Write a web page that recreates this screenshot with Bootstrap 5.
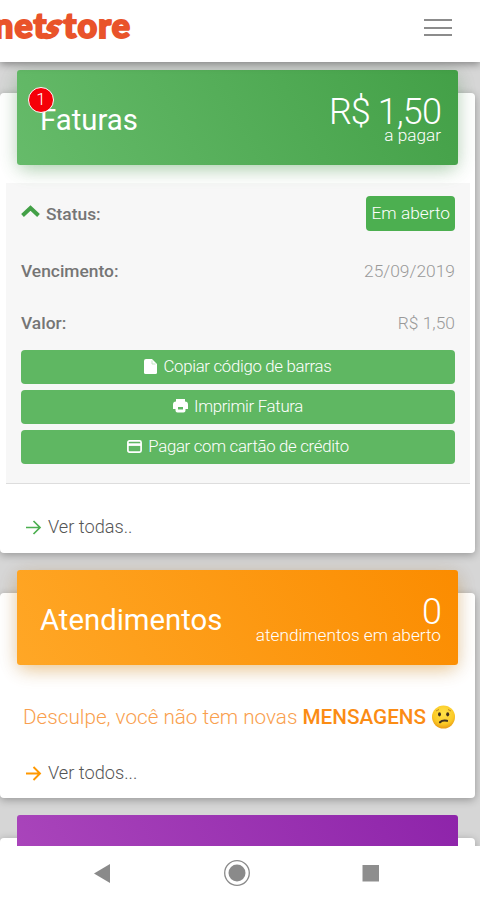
<!DOCTYPE html>
<html lang="pt-BR">
<head>
<meta charset="utf-8">
<meta name="viewport" content="width=device-width, initial-scale=1">
<title>netstore</title>
<link href="https://cdn.jsdelivr.net/npm/bootstrap@5.3.0/dist/css/bootstrap.min.css" rel="stylesheet">
<style>
body{font-family:Roboto,"Liberation Sans",sans-serif;font-weight:300;font-size:18px;line-height:24px;color:#555;background:#d6d6d6;height:900px}
.topbar{height:62px;box-shadow:0 2px 8px rgba(0,0,0,.4);z-index:3;padding:0 28px 7px 0}
.brand{font-family:Lato,sans-serif;font-weight:900;font-size:34px;line-height:40px;letter-spacing:1.1px;color:#e9532a;-webkit-text-stroke:2px #e9532a;margin-left:-6px;margin-top:-5px}
.brand i{display:inline-block;font-style:normal;transform:skewX(-26deg)}
.burger{width:28px;height:17px;border:0;padding:0;background:none}
.burger span{display:block;height:2px;background:#8c8c8c}
.feed{height:784px;padding-right:5px}
.panel{background:#fff;border:0;border-radius:4px;box-shadow:0 2px 8px rgba(0,0,0,.3)}
.panel-a{margin-top:31px;height:460px}
.panel-b{margin-top:40px;height:205px}
.panel-c{margin-top:40px;height:200px}
.banner{margin:-23px 17px 0 17px;height:95px;border-radius:3px;color:#fff;padding:0 17px 0 23px}
.banner h2{font-size:29.3px;font-weight:400;line-height:36px;margin:4px 0 0}
.banner .amount{font-size:36px;line-height:36px;letter-spacing:-.9px}
.banner .caption-line{font-size:17.2px;line-height:12px;margin-top:-1px}
.b-green{background:linear-gradient(60deg,#66bb6a,#43a047);box-shadow:0 6px 18px -4px rgba(76,175,80,.45),0 4px 20px rgba(0,0,0,.1)}
.b-orange{background:linear-gradient(60deg,#ffa726,#fb8c00);box-shadow:0 6px 18px -4px rgba(255,152,0,.45),0 4px 20px rgba(0,0,0,.12)}
.b-purple{background:linear-gradient(60deg,#ab47bc,#8e24aa)}
.count{position:absolute;left:11px;top:17px;width:26px;height:26px;border-radius:50%;background:#f50008;border:1.5px solid #fff;font-size:17px;line-height:23px;text-align:center}
.detail{margin:18px 5px 0 6px;height:301px;background:#f7f7f7;border-bottom:1.5px solid #ddd;padding:13px 15px 0}
.detail strong{font-weight:500;color:#757575;font-size:17.4px}
.detail .val{color:#999;font-size:17.4px}
.r1{height:35px}
.r2{height:52px}
.r1 + .r2{margin-top:14px}
.status-tag{background:#4caf50;color:#fff;border-radius:4px;height:35px;line-height:35px;padding:0 5px 0 6px;font-size:17.3px}
.btn-stack{margin-top:1px}
.btn-act{height:34px;background:#5fb762;color:#fff;border:0;border-radius:4px;padding:0 0 2px;font-size:16.8px;letter-spacing:-.3px;font-weight:300;line-height:32px}
.btn-act svg,.more svg{margin-right:6px}
.chev{margin:-3px 6px 0 0}
.more{color:#555;font-size:18.2px;padding-left:26px}
.notice{color:#f9a04e;font-size:20.7px;padding-left:23px;margin-top:39px;line-height:26px}
.notice strong{font-weight:500;color:#fb8c14}
.sysbar{height:54px;background:#fff;z-index:3}
</style>
<script src="https://cdn.jsdelivr.net/npm/bootstrap@5.3.0/dist/js/bootstrap.bundle.min.js"></script>
</head>
<body class="d-flex flex-column overflow-hidden m-0">
<header class="topbar bg-white d-flex align-items-center justify-content-between position-relative flex-shrink-0">
  <div class="brand text-nowrap">net<i>s</i>tore</div>
  <button class="burger d-flex flex-column justify-content-between" aria-label="Menu"><span class="w-100"></span><span class="w-100"></span><span class="w-100"></span></button>
</header>

<main class="feed overflow-hidden flex-shrink-0">
  <section class="card panel panel-a">
    <div class="banner b-green position-relative d-flex align-items-center justify-content-between">
      <h2>Faturas</h2>
      <span class="count">1</span>
      <div class="text-end"><div class="amount">R$ 1,50</div><div class="caption-line">a pagar</div></div>
    </div>
    <div class="detail">
      <div class="r1 d-flex align-items-center justify-content-between">
        <div class="d-flex align-items-center"><svg width="19" height="14" viewBox="0 0 19 14" class="chev"><path d="M1.500 10.500 9.500 3l8 7.500" fill="none" stroke="#43a047" stroke-width="4"/></svg><strong>Status:</strong></div>
        <span class="status-tag">Em aberto</span>
      </div>
      <div class="r2 d-flex align-items-center justify-content-between"><strong>Vencimento:</strong><span class="val">25/09/2019</span></div>
      <div class="r2 d-flex align-items-center justify-content-between"><strong>Valor:</strong><span class="val">R$ 1,50</span></div>
      <div class="d-grid btn-stack" style="gap:6px">
        <button class="btn btn-act d-flex align-items-center justify-content-center"><svg width="13" height="15" viewBox="0 0 13 15"><path d="M2 0h6l5 5v8.500a1.500 1.500 0 0 1-1.500 1.500h-10A1.500 1.500 0 0 1 0 13.500V2a2 2 0 0 1 2-2Z" fill="#fff"/><path d="M8 1.500V5h3.500" fill="none" stroke="#b5dfb6" stroke-width=".8"/></svg><span>Copiar código de barras</span></button>
        <button class="btn btn-act d-flex align-items-center justify-content-center"><svg width="15" height="14" viewBox="0 0 15 14"><path d="M3 0h9v2.500a3 3 0 0 1 3 3V10h-2.500v1.500a2 2 0 0 1-2 2h-6a2 2 0 0 1-2-2V10H0V5.500a3 3 0 0 1 3-3Z" fill="#fff"/><path d="M5 8h5v2.500H5z" fill="#5fb762"/></svg><span>Imprimir Fatura</span></button>
        <button class="btn btn-act d-flex align-items-center justify-content-center"><svg width="15" height="13" viewBox="0 0 15 13"><rect x=".9" y=".9" width="13.200" height="11.200" rx="1.500" fill="none" stroke="#fff" stroke-width="1.700"/><path d="M1 4.600h13" stroke="#fff" stroke-width="2.600"/></svg><span>Pagar com cartão de crédito</span></button>
      </div>
    </div>
    <div class="more d-flex align-items-center" style="margin-top:31px"><svg width="16" height="15" viewBox="0 0 16 15"><path d="M0 7.500h14M7.500 1l6.500 6.500L7.500 14" fill="none" stroke="#4caf50" stroke-width="1.700"/></svg><span>Ver todas..</span></div>
  </section>

  <section class="card panel panel-b">
    <div class="banner b-orange d-flex align-items-center justify-content-between">
      <h2>Atendimentos</h2>
      <div class="text-end"><div class="amount">0</div><div class="caption-line">atendimentos em aberto</div></div>
    </div>
    <div class="notice d-flex align-items-center text-nowrap"><span>Desculpe, você não tem novas <strong>MENSAGENS</strong></span>
      <svg width="25" height="24" viewBox="0 0 24 24" style="margin-left:5px"><defs><radialGradient id="face" cx=".5" cy=".35" r=".65"><stop offset="0" stop-color="#ffe34a"/><stop offset=".7" stop-color="#fbc926"/><stop offset="1" stop-color="#e99c16"/></radialGradient></defs><circle cx="12" cy="12" r="11.500" fill="url(#face)"/><ellipse cx="8" cy="9.300" rx="1.500" ry="2.100" fill="#403020"/><ellipse cx="16.200" cy="9.300" rx="1.500" ry="2.100" fill="#403020"/><path d="M8.500 17.300q2.500-2.500 7-1.500" fill="none" stroke="#403020" stroke-width="2.200" stroke-linecap="round"/><path d="M4.500 6l3-1.500M16.500 4.500 19.500 6" stroke="#ad7920" stroke-width=".8"/></svg></div>
    <div class="more d-flex align-items-center" style="margin-top:31px"><svg width="16" height="15" viewBox="0 0 16 15"><path d="M0 7.500h14M7.500 1l6.500 6.500L7.500 14" fill="none" stroke="#ff9800" stroke-width="1.900"/></svg><span>Ver todos...</span></div>
  </section>

  <section class="card panel panel-c"><div class="banner b-purple"></div></section>
</main>

<nav class="sysbar position-relative flex-shrink-0 d-flex justify-content-center align-items-center">
  <svg width="480" height="54" viewBox="0 0 480 54"><path d="M94 27.500 110 18v19Z" fill="#8a8a8a"/><circle cx="237" cy="27" r="12.300" fill="none" stroke="#8a8a8a" stroke-width="1.300"/><circle cx="237" cy="27" r="8.500" fill="#8a8a8a"/><path d="M362.500 19h16.500v16.500h-16.500z" fill="#8e8e8e"/></svg>
</nav>
</body>
</html>
